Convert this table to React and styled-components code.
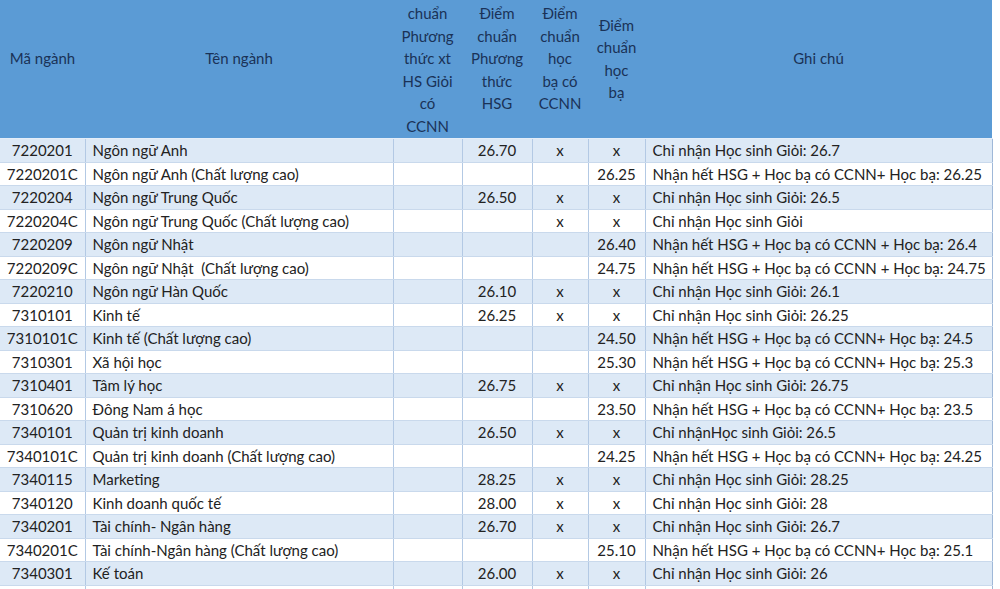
import React from "react";
import styled, { createGlobalStyle } from "styled-components";

const Global = createGlobalStyle`
  html, body { margin: 0; padding: 0; background: #ffffff; overflow: hidden; }
  body { width: 1000px; height: 589px; }
`;

const Sheet = styled.div`
  width: 1000px;
  height: 589px;
  overflow: hidden;
  background: #ffffff;
`;

const Table = styled.table`
  margin-top: -21px;
  width: 992px;
  table-layout: fixed;
  border-collapse: collapse;
  font-family: "Lato", "Open Sans", sans-serif;
  font-size: 15px;
  color: #222222;
`;

const HeadCell = styled.th`
  height: 159px;
  padding: 0 2px;
  background: #5b9bd5;
  color: #1a3257;
  font-weight: 400;
  line-height: 22.5px;
  text-align: center;
  vertical-align: middle;
  border-bottom: 1px solid #e4edf8;
`;

const Row = styled.tr`
  height: 23.5px;
  background: ${(p) => (p.$striped ? "#dde9f6" : "#ffffff")};
`;

const Cell = styled.td`
  padding: 0 ${(p) => (p.$align === "left" ? "7px" : "2px")};
  text-align: ${(p) => (p.$align === "left" ? "left" : "center")};
  white-space: pre;
  overflow: hidden;
  line-height: 22px;
  border-right: 1px solid #b3c9e4;
  border-bottom: 1px solid #c9d9ec;
  &:last-child { border-right: 1px solid #9fb8d8; }
`;

const widths = [85, 308, 69, 70, 56, 57, 347];

const headers = [
  ["Mã ngành"],
  ["Tên ngành"],
  ["Điểm", "chuẩn", "Phương", "thức xt", "HS Giỏi", "có", "CCNN"],
  ["Điểm", "chuẩn", "Phương", "thức", "HSG"],
  ["Điểm", "chuẩn", "học", "bạ có", "CCNN"],
  ["Điểm", "chuẩn", "học", "bạ"],
  ["Ghi chú"],
];

const HSG = (s) => "Chỉ nhận Học sinh Giỏi: " + s;
const ALL = (s) => "Nhận hết HSG + Học bạ có CCNN+ Học bạ: " + s;

const rows = [
  ["7220201", "Ngôn ngữ Anh", "", "26.70", "x", "x", HSG("26.7")],
  ["7220201C", "Ngôn ngữ Anh (Chất lượng cao)", "", "", "", "26.25", ALL("26.25")],
  ["7220204", "Ngôn ngữ Trung Quốc", "", "26.50", "x", "x", HSG("26.5")],
  ["7220204C", "Ngôn ngữ Trung Quốc (Chất lượng cao)", "", "", "x", "x", "Chỉ nhận Học sinh Giỏi"],
  ["7220209", "Ngôn ngữ Nhật", "", "", "", "26.40", "Nhận hết HSG + Học bạ có CCNN + Học bạ: 26.4"],
  ["7220209C", "Ngôn ngữ Nhật  (Chất lượng cao)", "", "", "", "24.75", "Nhận hết HSG + Học bạ có CCNN + Học bạ: 24.75"],
  ["7220210", "Ngôn ngữ Hàn Quốc", "", "26.10", "x", "x", HSG("26.1")],
  ["7310101", "Kinh tế", "", "26.25", "x", "x", HSG("26.25")],
  ["7310101C", "Kinh tế (Chất lượng cao)", "", "", "", "24.50", ALL("24.5")],
  ["7310301", "Xã hội học", "", "", "", "25.30", ALL("25.3")],
  ["7310401", "Tâm lý học", "", "26.75", "x", "x", HSG("26.75")],
  ["7310620", "Đông Nam á học", "", "", "", "23.50", ALL("23.5")],
  ["7340101", "Quản trị kinh doanh", "", "26.50", "x", "x", "Chỉ nhậnHọc sinh Giỏi: 26.5"],
  ["7340101C", "Quản trị kinh doanh (Chất lượng cao)", "", "", "", "24.25", ALL("24.25")],
  ["7340115", "Marketing", "", "28.25", "x", "x", HSG("28.25")],
  ["7340120", "Kinh doanh quốc tế", "", "28.00", "x", "x", HSG("28")],
  ["7340201", "Tài chính- Ngân hàng", "", "26.70", "x", "x", HSG("26.7")],
  ["7340201C", "Tài chính-Ngân hàng (Chất lượng cao)", "", "", "", "25.10", ALL("25.1")],
  ["7340301", "Kế toán", "", "26.00", "x", "x", HSG("26")],
  ["7340301C", "Kế toán (Chất lượng cao)", "", "", "", "24.10", ALL("24.1")],
];

const leftCols = new Set([1, 6]);

export default function App() {
  return (
    <Sheet>
      <Global />
      <Table>
        <colgroup>
          {widths.map((w, i) => (
            <col key={i} style={{ width: w }} />
          ))}
        </colgroup>
        <thead>
          <tr>
            {headers.map((lines, i) => (
              <HeadCell key={i}>
                {lines.map((l, j) => (
                  <React.Fragment key={j}>
                    {j > 0 && <br />}
                    {l}
                  </React.Fragment>
                ))}
              </HeadCell>
            ))}
          </tr>
        </thead>
        <tbody>
          {rows.map((r, i) => (
            <Row key={i} $striped={i % 2 === 0}>
              {r.map((c, j) => (
                <Cell key={j} $align={leftCols.has(j) ? "left" : "center"}>
                  {c}
                </Cell>
              ))}
            </Row>
          ))}
        </tbody>
      </Table>
    </Sheet>
  );
}
